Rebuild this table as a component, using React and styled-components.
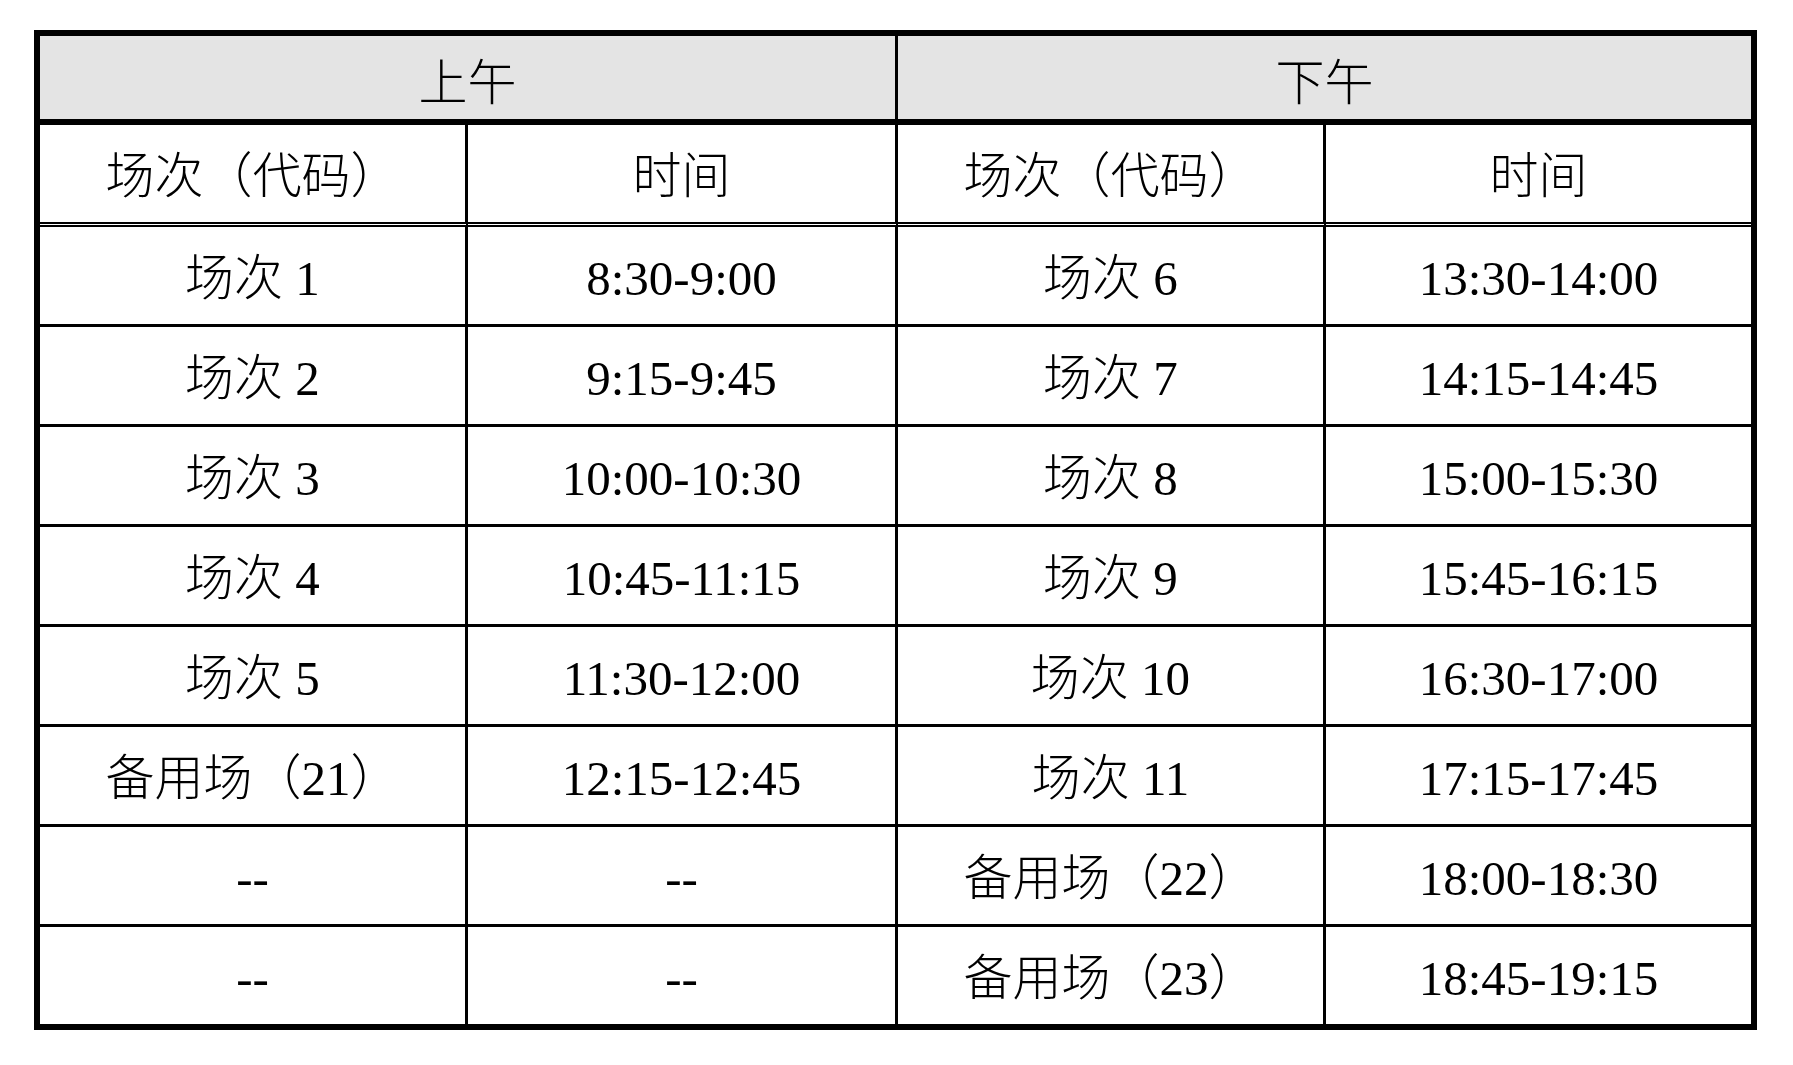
import React from "react";
import styled, { createGlobalStyle } from "styled-components";

const GlobalStyle = createGlobalStyle`
  html, body {
    margin: 0;
    padding: 0;
    background: #ffffff;
  }
  body {
    font-family: "Liberation Serif", "Noto Sans CJK SC", serif;
    color: #000;
  }
`;

const Page = styled.div`
  padding: 30px 0 0 34px;
  background: #fff;
  min-height: 1035px;
`;

const Table = styled.div`
  display: inline-grid;
  grid-template-columns: 428px 430px 428px 425px;
  border: 6px solid #000;
  font-family: "Liberation Serif", "Noto Sans CJK SC", serif;
  font-size: 49px;
  font-weight: 300;
  line-height: 1;
`;

const Cell = styled.div`
  box-sizing: border-box;
  display: flex;
  align-items: center;
  justify-content: center;
  white-space: pre;
  border-right: ${(p) => (p.$last ? "none" : "3px solid #000")};
  grid-column: ${(p) => (p.$span ? `span ${p.$span}` : "auto")};
`;

const PeriodCell = styled(Cell)`
  height: 89px;
  padding-top: 12px;
  background: #e4e4e4;
  border-bottom: 6px solid #000;
`;

const ColHeadCell = styled(Cell)`
  height: 102px;
  padding-top: 5px;
  border-bottom: 5px double #000;
`;

const DataCell = styled(Cell)`
  height: ${(p) => (p.$lastRow ? "97px" : "100px")};
  padding-top: 5px;
  border-bottom: ${(p) => (p.$lastRow ? "none" : "3px solid #000")};
`;

const rows = [
  ["场次 1", "8:30-9:00", "场次 6", "13:30-14:00"],
  ["场次 2", "9:15-9:45", "场次 7", "14:15-14:45"],
  ["场次 3", "10:00-10:30", "场次 8", "15:00-15:30"],
  ["场次 4", "10:45-11:15", "场次 9", "15:45-16:15"],
  ["场次 5", "11:30-12:00", "场次 10", "16:30-17:00"],
  ["备用场（21）", "12:15-12:45", "场次 11", "17:15-17:45"],
  ["--", "--", "备用场（22）", "18:00-18:30"],
  ["--", "--", "备用场（23）", "18:45-19:15"],
];

const colHeads = ["场次（代码）", "时间", "场次（代码）", "时间"];

export default function App() {
  return (
    <>
      <GlobalStyle />
      <Page>
        <Table>
          <PeriodCell $span={2}>上午</PeriodCell>
          <PeriodCell $span={2} $last>
            下午
          </PeriodCell>
          {colHeads.map((h, i) => (
            <ColHeadCell key={`h${i}`} $last={i === 3}>
              {h}
            </ColHeadCell>
          ))}
          {rows.map((r, ri) =>
            r.map((v, ci) => (
              <DataCell
                key={`${ri}-${ci}`}
                $last={ci === 3}
                $lastRow={ri === rows.length - 1}
              >
                {v}
              </DataCell>
            ))
          )}
        </Table>
      </Page>
    </>
  );
}
